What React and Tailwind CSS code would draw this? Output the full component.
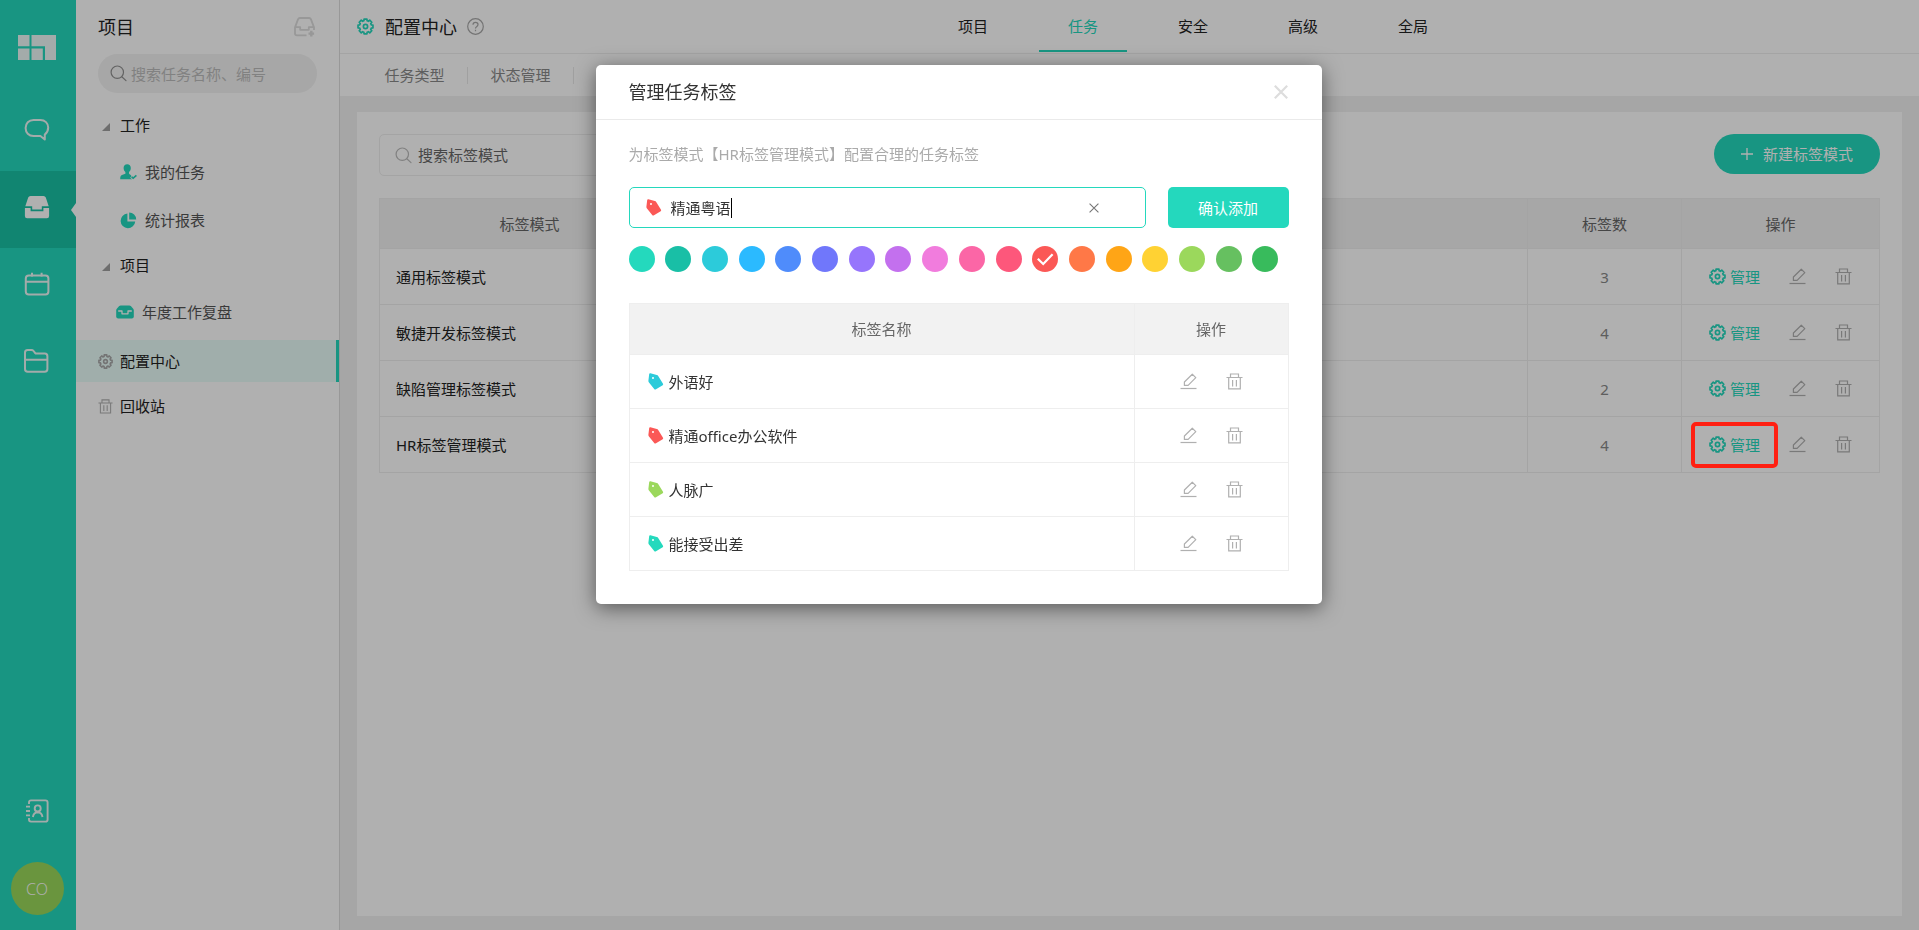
import React from "react";

const gearPath = (() => {
  const pts = [];
  const teeth = 8;
  for (let i = 0; i < teeth; i++) {
    const c = (i * 2 * Math.PI) / teeth - Math.PI / 2;
    [[-0.27, 6], [-0.19, 7.6], [0.19, 7.6], [0.27, 6]].forEach(([d, r]) => {
      pts.push(`${(8.5 + r * Math.cos(c + d)).toFixed(2)} ${(8.5 + r * Math.sin(c + d)).toFixed(2)}`);
    });
  }
  return `M${pts.join("L")}Z`;
})();

const Gear = ({ className = "size-[17px]", sw = 1.7 }) => (
  <svg viewBox="0 0 17 17" className={`shrink-0 ${className}`} fill="none" stroke="currentColor" strokeWidth={sw} strokeLinejoin="round" aria-hidden="true">
    <path d={gearPath} />
    <circle cx="8.5" cy="8.5" r="2.1" />
  </svg>
);

const Search = ({ className }) => (
  <svg viewBox="0 0 17 17" className={`size-[17px] shrink-0 ${className}`} fill="none" stroke="currentColor" strokeWidth="1.2" strokeLinecap="round" aria-hidden="true">
    <circle cx="7.3" cy="7.2" r="6.2" />
    <path d="M11.8 11.8L16 15.6" />
  </svg>
);

const Pencil = () => (
  <svg viewBox="0 0 17 17" className="size-[17px]" fill="none" stroke="currentColor" strokeWidth="1.2" strokeLinejoin="round" aria-hidden="true">
    <path d="M4.4 12.4V9L12.3 1.2L15.8 4.6L8.1 12.4Z" />
    <path d="M0.5 15.5H16.5" />
  </svg>
);

const Trash = ({ className = "size-[17px]" }) => (
  <svg viewBox="0 0 17 17" className={`shrink-0 ${className}`} fill="none" stroke="currentColor" strokeWidth="1.2" aria-hidden="true">
    <path d="M0.5 4.5H16.5M4.5 4.5V1H12.5V4.5M2.7 4.5V15.9H14.3V4.5M6.6 7V13.6M10.4 7V13.6" />
  </svg>
);

const Tag = ({ className }) => (
  <svg viewBox="0 0 16 17" className={`h-[17px] w-4 shrink-0 ${className}`} fill="currentColor" aria-hidden="true">
    <path fillRule="evenodd" d="M2.4 0.3L8.8 1.9Q9.7 2.1 10.2 2.9L15 10.8Q15.5 11.7 14.7 12.3L8 16.3Q6.9 16.9 6.2 16L0.8 9.2Q0.3 8.5 0.4 7.7L1.2 1.1Q1.4 0.1 2.4 0.3ZM5 4.1A1 1 0 1 0 5 6.1A1 1 0 1 0 5 4.1Z" />
  </svg>
);

const Cross = ({ className, sw }) => (
  <svg viewBox="0 0 14 14" className={className} fill="none" stroke="currentColor" strokeWidth={sw} aria-hidden="true">
    <path d="M0.8 0.8L13.2 13.2M13.2 0.8L0.8 13.2" />
  </svg>
);

function Rail() {
  const item = "flex h-[77px] items-center justify-center pb-[5px]";
  return (
    <nav className="flex w-[76px] shrink-0 flex-col bg-[#24d8bd] text-[#edf8f6]">
      <div className="flex flex-col">
        <a href="#" aria-label="首页" className="flex h-[94px] items-center justify-center pr-0.5">
          <svg viewBox="0 0 38 25" className="h-[25px] w-[38px]" fill="currentColor" aria-hidden="true">
            <path d="M0 0H11.5V11.2H0ZM0 13.4H11.5V25H0ZM13.5 0H38V25H27V11.2H13.5ZM13.5 13.4H24.8V25H13.5Z" />
          </svg>
        </a>
        <a href="#" aria-label="消息" className={`${item} pr-0.5`}>
          <svg viewBox="0 0 26 24" className="h-6 w-[26px]" fill="none" stroke="currentColor" strokeWidth="2" strokeLinejoin="round" aria-hidden="true">
            <path d="M9.5 2H16.3C21 2 24.2 5.2 24.2 9.6C24.2 12.6 22.8 15 20.8 16.6V21.6L16.4 18H9.5C4.8 18 1.6 14.5 1.6 10C1.6 5.5 4.8 2 9.5 2Z" />
          </svg>
        </a>
        <a href="#" aria-label="项目" className={`${item} relative bg-[#19c1a4] pr-0.5 text-white`}>
          <svg viewBox="0 0 26 24" className="h-6 w-[26px]" fill="currentColor" aria-hidden="true">
            <path d="M6.5 1H19.5Q21.2 1 21.8 2.6L24.7 11.2H17.8V14.6H8.2V11.2H1.3L4.2 2.6Q4.8 1 6.5 1ZM0.9 13H6.6V16.2H19.4V13H25.1V21Q25.1 23.2 22.9 23.2H3.1Q0.9 23.2 0.9 21Z" />
          </svg>
          <svg viewBox="0 0 5 14" className="absolute right-0 top-8 h-3.5 w-[5px]" fill="currentColor" aria-hidden="true">
            <path d="M5 0L0 7L5 14Z" />
          </svg>
        </a>
        <a href="#" aria-label="日历" className={`${item} pr-0.5`}>
          <svg viewBox="0 0 26 24" className="h-6 w-[26px]" fill="none" stroke="currentColor" strokeWidth="2" aria-hidden="true">
            <rect x="1.8" y="3.6" width="22.6" height="18.8" rx="3" />
            <path d="M2 9.8H24.4M8 0.8V4.6M17.6 0.8V4.6" />
          </svg>
        </a>
        <a href="#" aria-label="文件" className={`${item} pr-0.5`}>
          <svg viewBox="0 0 26 24" className="h-6 w-[26px]" fill="none" stroke="currentColor" strokeWidth="2" strokeLinejoin="round" aria-hidden="true">
            <path d="M1 10.8V3.6Q1 1 3.6 1H7.4Q8.8 1 9.6 2L11 3.8Q11.6 4.6 12.8 4.6H20.8Q23.4 4.6 23.4 7.2V20Q23.4 22.8 20.6 22.8H3.8Q1 22.8 1 20ZM1 10.8H23.4" />
          </svg>
        </a>
      </div>
      <div className="mt-auto flex flex-col items-center pb-[15px] pr-0.5">
        <a href="#" aria-label="通讯录" className="mb-[39px]">
          <svg viewBox="0 0 24 24" className="size-6" fill="none" stroke="currentColor" strokeWidth="1.9" aria-hidden="true">
            <path d="M4 5V3.4Q4 1.4 6 1.4H20.4Q22.6 1.4 22.6 3.6V20.4Q22.6 22.6 20.4 22.6H6Q4 22.6 4 20.6V19M1 7.6H5M1 12H5M1 16.4H5" />
            <circle cx="12.7" cy="9.4" r="3" />
            <path d="M7.9 18Q8.6 13.4 12.7 13.2Q16.8 13.4 17.5 18" />
          </svg>
        </a>
        <button type="button" className="size-[53px] rounded-full bg-[#9ad85b] font-['Open_Sans',sans-serif] text-base font-light leading-5 text-white">CO</button>
      </div>
    </nav>
  );
}

const Triangle = () => (
  <svg viewBox="0 0 8 8" className="mt-1 size-2 shrink-0" fill="#a0a0a0" aria-hidden="true">
    <path d="M8 0V8H0Z" />
  </svg>
);

function Side() {
  const sub = "flex h-12 items-center text-[#555]";
  return (
    <aside className="w-[264px] shrink-0 border-r border-[#dcdcdc] bg-white text-[15px] leading-5 text-[#222]">
      <div className="flex h-[54px] items-center justify-between pl-[22px] pr-6">
        <h2 className="text-lg leading-6">项目</h2>
        <button type="button" aria-label="新建项目" className="text-[#dcdcdc]">
          <svg viewBox="0 0 21 20" className="h-5 w-[21px]" fill="none" stroke="currentColor" strokeWidth="1.8" strokeLinejoin="round" aria-hidden="true">
            <path d="M12.5 18.4H3Q1 18.4 1 16.4V10.4L4 2.4Q4.5 1 6 1H15Q16.5 1 17 2.4L20 10.4V13M1 10.2H6.2V12.8H14.8V10.2H20" />
            <path d="M17.3 13.8V19.4M14.5 16.6H20.1" strokeWidth="2.4" />
          </svg>
        </button>
      </div>
      <label className="mx-[22px] flex h-[39px] items-center gap-1 rounded-full bg-[#f2f2f2] pl-3">
        <Search className="text-[#909090]" />
        <input type="search" aria-label="搜索" placeholder="搜索任务名称、编号" className="w-full min-w-0 bg-transparent outline-none placeholder:text-[#bcbcbc]" />
      </label>
      <nav className="pt-[11px]">
        <button type="button" className="mb-0.5 flex h-[42px] items-center gap-2.5 pl-[26px]"><Triangle />工作</button>
        <a href="#" className={`${sub} gap-2 pl-11`}>
          <svg viewBox="0 0 17 16" className="h-4 w-[17px] shrink-0 text-[#24d8bd]" fill="currentColor" aria-hidden="true">
            <path d="M7.2 0.2C9.4 0.2 10.8 1.7 10.8 4C10.8 5.8 10 7.2 9 8.1V9.6C9 10.6 12.4 11 12.4 15.2H0.2C0.2 12.2 0.8 11.4 2.6 10.8L5.4 9.8V8.1C4.4 7.2 3.6 5.8 3.6 4C3.6 1.7 5 0.2 7.2 0.2Z" />
            <path d="M11.2 12.6L13.2 14.4L16.4 11.6" fill="none" stroke="white" strokeWidth="3" />
            <path d="M11.6 12.8L13.2 14.2L16.4 11.4" fill="none" stroke="currentColor" strokeWidth="1.6" />
          </svg>
          我的任务
        </a>
        <a href="#" className={`${sub} gap-2 pl-11`}>
          <svg viewBox="0 0 17 17" className="size-[17px] shrink-0 text-[#24d8bd]" fill="currentColor" aria-hidden="true">
            <path d="M7.4 1.6V9.4H15.2A7.3 7.3 0 1 1 7.4 1.6ZM9.2 0.4A7 7 0 0 1 16.2 7.4H9.2Z" />
          </svg>
          统计报表
        </a>
        <button type="button" className="mb-0.5 flex h-[42px] items-center gap-2.5 pl-[26px]"><Triangle />项目</button>
        <a href="#" className={`${sub} gap-2 pl-10`}>
          <svg viewBox="0 0 18 14" className="h-3.5 w-[18px] shrink-0 text-[#24d8bd]" aria-hidden="true">
            <path fill="currentColor" d="M4.6 0.4H13.4Q14.2 0.4 14.8 1L17.2 3.8Q17.8 4.6 17.8 5.6V11.6Q17.8 13.6 15.8 13.6H2.2Q0.2 13.6 0.2 11.6V5.6Q0.2 4.6 0.8 3.8L3.2 1Q3.8 0.4 4.6 0.4Z" />
            <path d="M2.2 6H6V8.8H12V6H15.8" fill="none" stroke="white" strokeWidth="1.3" strokeLinejoin="round" />
          </svg>
          年度工作复盘
        </a>
        <a href="#" className="mt-1 flex h-[42px] items-center gap-[7px] border-r-3 border-[#24d8bd] bg-[#e8fcf8] pl-[22px]">
          <Gear className="size-[15px] text-[#a8a8a8]" sw={1.8} />配置中心
        </a>
        <a href="#" className="mt-[3px] flex h-[42px] items-center gap-[7px] pl-[22px]">
          <Trash className="size-[15px] text-[#b0b0b0]" />回收站
        </a>
      </nav>
    </aside>
  );
}

const modes = [
  ["通用标签模式", 3],
  ["敏捷开发标签模式", 4],
  ["缺陷管理标签模式", 2],
  ["HR标签管理模式", 4],
];
const topTabs = ["项目", "任务", "安全", "高级", "全局"];

function Main() {
  const cell = "border border-[#eeeeee]";
  return (
    <div className="flex min-w-0 flex-1 flex-col text-[15px] leading-5">
      <header className="flex h-[54px] border-b border-[#eeeeee] bg-white">
        <div className="flex w-[589px] shrink-0 items-center pl-[17px]">
          <Gear className="size-[17px] text-[#24d8bd]" />
          <h1 className="ml-[11px] text-lg leading-6 text-[#222]">配置中心</h1>
          <button type="button" aria-label="帮助" className="ml-2.5 text-[#a8a8a8]">
            <svg viewBox="0 0 17 17" className="size-[17px]" fill="none" stroke="currentColor" strokeWidth="1.2" aria-hidden="true">
              <circle cx="8.5" cy="8.5" r="7.8" />
              <path d="M6 6.8Q6 4.4 8.5 4.4Q11 4.4 11 6.6Q11 7.8 9.6 8.7Q8.5 9.4 8.5 10.6M8.5 11.8V13.2" />
            </svg>
          </button>
        </div>
        <nav className="flex h-[52px] gap-[22px]">
          {topTabs.map((t) => (
            <a key={t} href="#" className={`flex w-[88px] items-center justify-center border-y-2 border-t-transparent ${t === "任务" ? "border-b-[#24d8bd] text-[#24d8bd]" : "border-b-transparent text-[#222]"}`}>{t}</a>
          ))}
        </nav>
      </header>
      <nav className="flex h-[42px] items-center bg-white pl-[22px] text-[#888]">
        {["任务类型", "状态管理"].map((t) => (
          <a key={t} href="#" className="flex h-[17px] w-[106px] items-center justify-center border-r border-[#e8e8e8]">{t}</a>
        ))}
      </nav>
      <main className="flex flex-1 flex-col bg-[#f1f1f1] px-[17px] pb-3.5 pt-4">
        <section className="flex-1 bg-white p-[22px]">
          <div className="flex items-start justify-between">
            <label className="flex h-[42px] w-[286px] items-center gap-1.5 rounded-[5px] border border-[#eeeeee] pl-[15px]">
              <Search className="text-[#bbb]" />
              <input type="search" aria-label="搜索标签模式" placeholder="搜索标签模式" className="w-full min-w-0 bg-transparent outline-none placeholder:text-[#666]" />
            </label>
            <button type="button" className="flex h-10 w-[166px] items-center justify-center gap-2.5 rounded-full bg-[#24d8bd] text-white">
              <svg viewBox="0 0 12 12" className="size-3" fill="none" stroke="currentColor" strokeWidth="1.3" aria-hidden="true"><path d="M6 0V12M0 6H12" /></svg>
              新建标签模式
            </button>
          </div>
          <table className="mt-[22px] w-full table-fixed border-collapse text-[#666]">
            <colgroup>
              <col className="w-1/5" />
              <col />
              <col className="w-[154px]" />
              <col className="w-[198px]" />
            </colgroup>
            <thead>
              <tr className="h-[50px] bg-[#f2f2f2]">
                <th scope="col" className={`${cell} font-normal`}>标签模式</th>
                <td className={cell} />
                <th scope="col" className={`${cell} font-normal`}>标签数</th>
                <th scope="col" className={`${cell} font-normal`}>操作</th>
              </tr>
            </thead>
            <tbody>
              {modes.map(([name, n], i) => (
                <tr key={name} className="h-14">
                  <td className={`${cell} pl-4 text-[#222]`}>{name}</td>
                  <td className={cell} />
                  <td className={`${cell} text-center text-[#888]`}>{n}</td>
                  <td className={cell}>
                    <div className="flex items-center justify-center gap-[29px] text-[#b0b0b0]">
                      <button type="button" className="relative flex items-center gap-1 text-[#24d8bd]">
                        <Gear />管理
                        {i === 3 && <span className="absolute -left-[18px] -right-[18px] -top-[13px] z-[45] h-[46px] rounded-[5px] border-4 border-[#ff2012]" />}
                      </button>
                      <button type="button" aria-label="编辑"><Pencil /></button>
                      <button type="button" aria-label="删除"><Trash /></button>
                    </div>
                  </td>
                </tr>
              ))}
            </tbody>
          </table>
        </section>
      </main>
    </div>
  );
}

const swatches = [
  "bg-[#24d9bd]", "bg-[#19bfa6]", "bg-[#2ccbda]", "bg-[#2bbaff]", "bg-[#4f8cfb]", "bg-[#7077fb]",
  "bg-[#9675fc]", "bg-[#c370ee]", "bg-[#f17cdd]", "bg-[#fb66a6]", "bg-[#fd577b]", "bg-[#fb5856]",
  "bg-[#ff7847]", "bg-[#ffa516]", "bg-[#ffd233]", "bg-[#9bd85c]", "bg-[#66c060]", "bg-[#38bb5c]",
];
const tags = [
  ["外语好", "text-[#2ccbda]"],
  ["精通office办公软件", "text-[#fb5856]"],
  ["人脉广", "text-[#9bd85c]"],
  ["能接受出差", "text-[#24d9bd]"],
];

function Modal() {
  const cell = "border border-[#eeeeee]";
  return (
    <div className="fixed inset-0 z-50 flex items-start justify-center pr-0.5 pt-[65px]">
      <div role="dialog" aria-labelledby="dialog-title" className="w-[726px] rounded-[5px] bg-white text-[15px] leading-5 shadow-[0_4px_20px_rgba(0,0,0,0.5)]">
        <div className="flex h-[55px] items-center justify-between border-b border-[#eaeaea] pl-[33px] pr-[34px]">
          <h2 id="dialog-title" className="text-lg leading-6 text-[#333]">管理任务标签</h2>
          <button type="button" aria-label="关闭" className="text-[#ddd]"><Cross className="size-3.5" sw={2.2} /></button>
        </div>
        <div className="px-[33px] pb-[33px] pt-6">
          <p className="text-[#aaa]">为标签模式【HR标签管理模式】配置合理的任务标签</p>
          <div className="mt-[23px] flex gap-[22px]">
            <div className="flex h-[41px] flex-1 items-center rounded-[5px] border border-[#24d8bd] pl-4 pr-[46px]">
              <Tag className="mr-[9px] text-[#fb5856]" />
              <input type="text" aria-label="标签名称" defaultValue="精通粤语" className="field-sizing-content bg-transparent text-[#333] outline-none" />
              <span className="h-5 w-px bg-black" />
              <button type="button" aria-label="清空" className="ml-auto text-[#777]"><Cross className="size-2.5" sw={1.6} /></button>
            </div>
            <button type="button" className="h-[41px] w-[121px] rounded-[5px] bg-[#24d8bd] text-white">确认添加</button>
          </div>
          <div role="radiogroup" aria-label="标签颜色" className="mr-[10px] mt-[18px] flex justify-between">
            {swatches.map((c, i) => (
              <label key={c} className="grid">
                <input type="radio" name="tag-color" aria-label={`颜色${i + 1}`} defaultChecked={i === 11} className={`peer col-start-1 row-start-1 size-[26px] appearance-none rounded-full ${c}`} />
                <svg viewBox="0 0 26 26" className="col-start-1 row-start-1 hidden size-[26px] peer-checked:block" fill="none" stroke="white" strokeWidth="2.2" aria-hidden="true">
                  <path d="M5.8 12.8L11.2 18L20.6 8.2" />
                </svg>
              </label>
            ))}
          </div>
          <table className="mt-[31px] w-full table-fixed border-collapse">
            <colgroup>
              <col />
              <col className="w-[154px]" />
            </colgroup>
            <thead>
              <tr className="h-[51px] bg-[#f2f2f2] text-[#666]">
                <th scope="col" className={`${cell} font-normal`}>标签名称</th>
                <th scope="col" className={`${cell} font-normal`}>操作</th>
              </tr>
            </thead>
            <tbody>
              {tags.map(([name, color]) => (
                <tr key={name} className="h-[54px]">
                  <td className={cell}>
                    <div className="flex items-center gap-[5px] pl-[18px] text-[#333]"><Tag className={color} />{name}</div>
                  </td>
                  <td className={cell}>
                    <div className="flex items-center justify-center gap-[29px] text-[#b0b0b0]">
                      <button type="button" aria-label="编辑"><Pencil /></button>
                      <button type="button" aria-label="删除"><Trash /></button>
                    </div>
                  </td>
                </tr>
              ))}
            </tbody>
          </table>
        </div>
      </div>
    </div>
  );
}

export default function App() {
  return (
    <div className="font-['Noto_Sans','Noto_Sans_CJK_SC',sans-serif]">
      <div className="flex min-h-screen">
        <Rail />
        <Side />
        <Main />
      </div>
      <div className="fixed inset-0 z-40 bg-black/31" />
      <Modal />
    </div>
  );
}
